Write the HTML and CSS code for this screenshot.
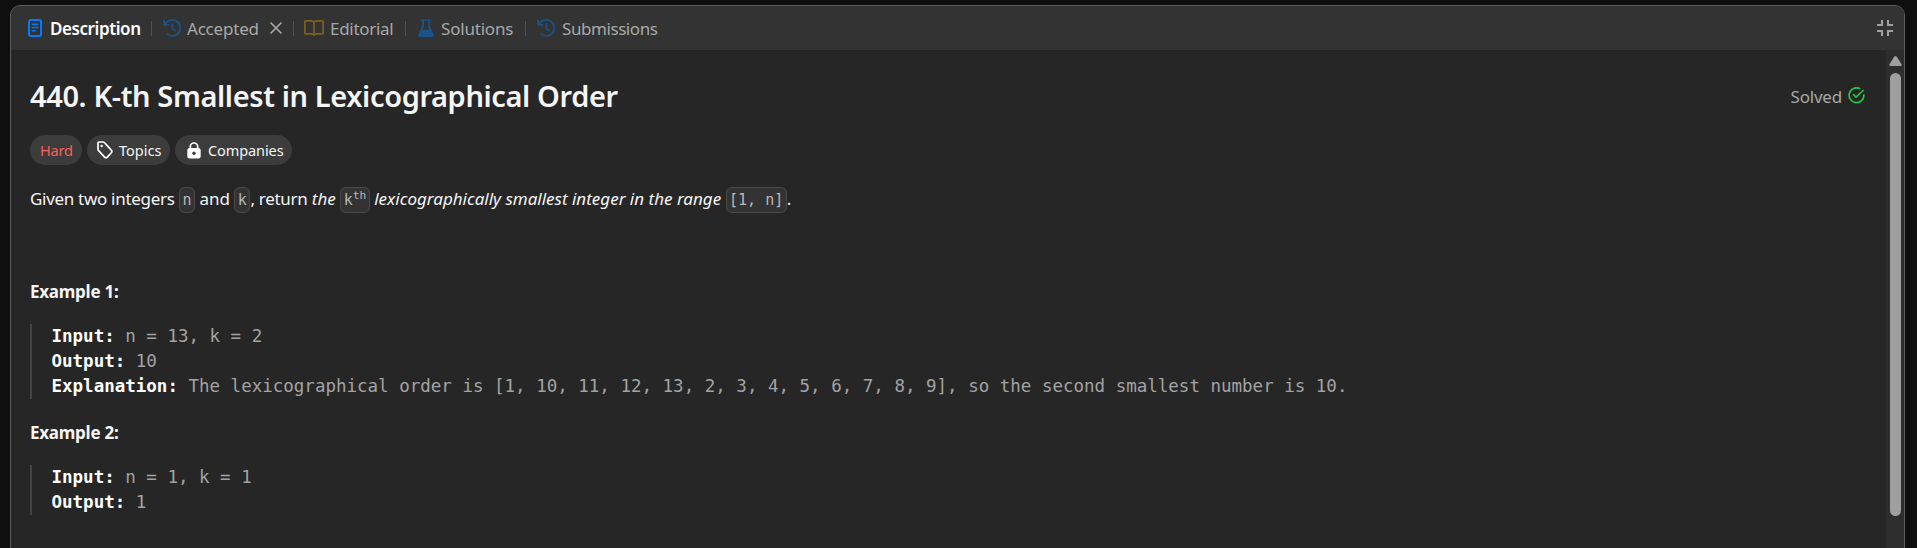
FILE: index.html
```
<!DOCTYPE html>
<html lang="en">
<head>
<meta charset="utf-8">
<title>440. K-th Smallest in Lexicographical Order</title>
<link rel="stylesheet" href="styles.css">
</head>
<body>
<svg class="defs" width="0" height="0">
  <symbol id="history" viewBox="0 0 18 18"><path d="M4.3 15.1A8 8 0 1 0 2.2 5.3M1.2 1.6v4.2h4.2M9.4 5.2v4.2l2.6 2.4" fill="none" stroke="currentColor" stroke-width="1.8" stroke-linecap="round" stroke-linejoin="round"/></symbol>
</svg>
<main class="panel">
  <header class="tabs">
    <div class="tab tab-description active">
      <svg class="icon" width="14" height="18" viewBox="0 0 14 18" fill="none" stroke="currentColor" stroke-linecap="round"><rect x="1" y="1" width="12" height="16" rx="2" stroke-width="2"/><path d="M4.2 5.2h5.6M4.2 8.5h5.6M4.2 11.7h3" stroke-width="1.4"/></svg>
      <span class="label">Description</span>
    </div>
    <i class="sep"></i>
    <div class="tab tab-accepted">
      <svg class="icon" width="18" height="18"><use href="#history"/></svg>
      <span class="label">Accepted</span>
      <svg class="close" width="12" height="12" viewBox="0 0 12 12"><path d="M1 1l10 10M11 1L1 11" stroke="currentColor" stroke-width="1.7" stroke-linecap="round"/></svg>
    </div>
    <i class="sep"></i>
    <div class="tab tab-editorial">
      <svg class="icon" width="20" height="16" viewBox="0 0 20 16" fill="none" stroke="currentColor" stroke-width="1.7" stroke-linejoin="round"><path d="M10 2.2C9.400 1.300 8.600.9 7.500.9H2Q.9.900.9 2v10.700q0 1.100 1.100 1.100h5.500c1.100 0 1.900.3 2.500 1.200.6-.9 1.400-1.200 2.500-1.200H18q1.100 0 1.100-1.100V2Q19.100.9 18 .9h-5.500c-1.100 0-1.900.4-2.500 1.300zM10 2.200V15"/></svg>
      <span class="label">Editorial</span>
    </div>
    <i class="sep"></i>
    <div class="tab tab-solutions">
      <svg class="icon" width="16" height="18" viewBox="0 0 16 18"><path d="M3.200.2h9.600a.8.8 0 0 1 0 1.600h-.9v5.600l3.900 8.100c.6 1.300-.2 2.500-1.500 2.500H1.700C.4 18-.4 16.800.2 15.500l3.900-8.100V1.800h-.9a.8.800 0 0 1 0-1.600z" fill="currentColor"/><path d="M5.900 1.800h4.200v6l1.300 2.900H4.600l1.300-2.900z" fill="#333"/></svg>
      <span class="label">Solutions</span>
    </div>
    <i class="sep"></i>
    <div class="tab tab-submissions">
      <svg class="icon" width="18" height="18"><use href="#history"/></svg>
      <span class="label">Submissions</span>
    </div>
    <svg class="shrink" width="16" height="16" viewBox="0 0 16 16"><path d="M5 0v5H0M11 0v5h5M5 16v-5H0M11 16v-5h5" fill="none" stroke="currentColor" stroke-width="2"/></svg>
  </header>
  <div class="body">
    <article class="content">
      <div class="heading">
        <h1>440. K-th Smallest in Lexicographical Order</h1>
        <div class="solved"><span>Solved</span>
          <svg width="17" height="17" viewBox="0 0 17 17" fill="none" stroke="#28c244" stroke-width="1.7" stroke-linecap="round" stroke-linejoin="round"><path d="M11.600 1.500A7.400 7.400 0 1 0 15.900 7.900M5.600 7.600l2.500 2.600 7-6.700"/></svg>
        </div>
      </div>
      <div class="chips">
        <span class="chip hard">Hard</span>
        <span class="chip topics"><svg width="16" height="18" viewBox="0 0 16 18"><path d="M1 2.100v6.200c0 .6.200 1 .6 1.400l6 6.400c.8.8 1.900.8 2.700 0l4-4.300c.7-.8.7-1.900 0-2.700l-6.500-7Q7.200 1 6.200 1H2Q1 1 1 2.100z" fill="none" stroke="#fff" stroke-width="1.700"/><circle cx="4.600" cy="5" r="1.200" fill="#fff"/></svg>Topics</span>
        <span class="chip companies"><svg width="14" height="17" viewBox="0 0 14 17"><path d="M3.300 7V4.700a3.700 3.700 0 0 1 7.400 0V7" fill="none" stroke="#fff" stroke-width="1.700"/><rect x=".3" y="6" width="13.400" height="10.500" rx="2.500" fill="#fff"/><circle cx="7" cy="11.200" r="1.700" fill="#3c3c3c"/></svg>Companies</span>
      </div>
      <p class="statement"><span class="tight">Given two integers</span> <code>n</code> and <code>k</code><span class="tight">, return</span> <em>the</em> <code>k<sup>th</sup></code> <em>lexicographically smallest integer in the range</em> <code>[1, n]</code>.</p>
      <h2>Example 1:</h2>
      <pre><b>Input:</b> n = 13, k = 2
<b>Output:</b> 10
<b>Explanation:</b> The lexicographical order is [1, 10, 11, 12, 13, 2, 3, 4, 5, 6, 7, 8, 9], so the second smallest number is 10.</pre>
      <h2>Example 2:</h2>
      <pre><b>Input:</b> n = 1, k = 1
<b>Output:</b> 1</pre>
    </article>
    <div class="scrollbar">
      <svg width="13" height="10" viewBox="0 0 13 10"><path d="M6.500 0Q7.300 0 8 1l4.500 7.200Q13.200 10 11.500 10h-10Q-.2 10 .5 8.200L5 1Q5.700 0 6.500 0z" fill="#9f9f9f"/></svg>
      <div class="thumb"></div>
    </div>
  </div>
</main>
</body>
</html>
```
FILE: styles.css
```
* { box-sizing: border-box; }
body {
  margin: 0;
  height: 548px;
  padding: 5px 12px 0 10px;
  overflow: hidden;
  background: #0f0f0f;
  color: #f5f5f5;
  font-family: "Noto Sans", "Open Sans", sans-serif;
  font-size: 17px;
}
.defs { display: block; position: absolute; }
.panel {
  height: 560px;
  display: flex;
  flex-direction: column;
  border: 1px solid #5c5c5c;
  border-radius: 10px;
  background: #262626;
  overflow: hidden;
}
.tabs {
  flex: none;
  height: 44px;
  padding: 0 11px 0 17px;
  display: flex;
  align-items: center;
  background: #333;
}
.tab { display: flex; align-items: center; color: #a8a8a8; height: 26px; }
.tab .icon { flex: none; }
.label { white-space: nowrap; line-height: 26px; padding-top: 1px; font-size: 17px; letter-spacing: -0.2px; }
.sep { flex: none; width: 1px; height: 15px; background: #505050; }
.tab-description { width: 123px; gap: 8px; color: #fff; }
.tab-description .icon { color: #007bff; }
.tab-description .label { font-weight: 600; letter-spacing: -0.42px; }
.tab-accepted { width: 141px; padding-left: 11px; }
.tab-accepted .icon, .tab-submissions .icon, .tab-solutions .icon { color: #1d5289; }
.tab-accepted .label { width: 89px; padding-left: 6px; }
.tab-editorial { width: 111px; padding-left: 10px; gap: 6px; }
.tab-editorial .icon { color: #80601b; }
.tab-editorial .label { letter-spacing: -0.3px; }
.tab-solutions { width: 119px; padding-left: 12px; gap: 7px; }
.tab-submissions { padding-left: 11px; gap: 7px; }
.tab-submissions .label { letter-spacing: -0.43px; }
.shrink { margin-left: auto; color: #a0a0a0; }
.body { flex: 1; display: flex; }
.content { flex: 1; padding: 23px 21px 0 19px; }
.heading { display: flex; justify-content: space-between; height: 46px; }
h1 { margin: 0; font-size: 29px; font-weight: 600; line-height: 45px; letter-spacing: -0.38px; white-space: nowrap; }
.solved { display: flex; align-items: center; gap: 6px; color: #a8a8a8; height: 46px; letter-spacing: -0.2px; }
.solved svg { margin-bottom: 2px; }
.chips { display: flex; gap: 5px; margin-top: 16px; }
.chip {
  display: flex;
  align-items: center;
  height: 30px;
  padding-left: 10px;
  border-radius: 15px;
  background: #3c3c3c;
  font-size: 14.5px;
  white-space: nowrap;
}
.hard { width: 52px; color: #f8615c; letter-spacing: -0.2px; }
.topics { width: 83px; gap: 6px; }
.companies { width: 117px; gap: 7px; padding-left: 12px; letter-spacing: -0.1px; }
.statement { margin: 20px 0 0; line-height: 28px; height: 28px; white-space: nowrap; }
.tight { letter-spacing: -0.3px; }
code {
  font-family: "DejaVu Sans Mono", monospace;
  font-size: 15px;
  font-style: normal;
  color: #b8b8b8;
  background: #333;
  border: 1px solid #4a4a4a;
  border-radius: 6px;
  padding: 3px 2.5px;
}
sup { font-size: 11.25px; line-height: 0; position: relative; vertical-align: baseline; top: -6px; }
h2 { margin: 0; font-size: 17px; font-weight: 700; line-height: 28px; letter-spacing: -0.25px; }
.statement + h2 { margin-top: 65px; }
pre {
  margin: 18px 0 20px;
  padding-left: 19.5px;
  border-left: 2px solid #444;
  font: 17.5px/25px "DejaVu Sans Mono", monospace;
  color: #a3a3a3;
}
pre b { color: #fff; }
.scrollbar { width: 18px; background: #2d2d2d; display: flex; flex-direction: column; align-items: center; padding-top: 6px; }
.thumb { margin-top: 7px; width: 11px; height: 443px; border-radius: 6px; background: #9f9f9f; }
```
